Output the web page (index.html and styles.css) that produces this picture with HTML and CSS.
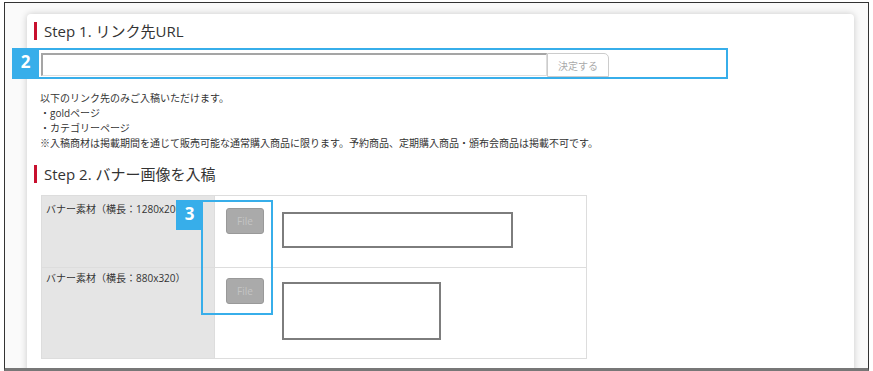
FILE: index.html
```html
<!DOCTYPE html>
<html>
<head>
  <meta charset="UTF-8">
  <title>バナー入稿</title>
  <link rel="stylesheet" href="styles.css">
</head>
<body>
  <div class="frame">
    <div class="card">
      <!-- Step 1 -->
      <h2 class="step-title">Step 1. リンク先URL</h2>
      <div class="url-row">
        <input type="text" class="url-input">
        <button class="btn-decide">決定する</button>
      </div>
      <div class="notes">
        <p>以下のリンク先のみご入稿いただけます。</p>
        <p>・goldページ</p>
        <p>・カテゴリーページ</p>
        <p>※入稿商材は掲載期間を通じて販売可能な通常購入商品に限ります。予約商品、定期購入商品・頒布会商品は掲載不可です。</p>
      </div>

      <!-- Step 2 -->
      <h2 class="step-title step-2">Step 2. バナー画像を入稿</h2>
      <table class="upload-table">
        <tr class="row-wide">
          <th>バナー素材（横長：1280x200）</th>
          <td>
            <div class="upload-cell">
              <button class="btn-file">File</button>
              <div class="preview preview-wide"></div>
            </div>
          </td>
        </tr>
        <tr class="row-small">
          <th>バナー素材（横長：880x320）</th>
          <td>
            <div class="upload-cell">
              <button class="btn-file">File</button>
              <div class="preview preview-small"></div>
            </div>
          </td>
        </tr>
      </table>
    </div>
  </div>

  <!-- Annotation markers -->
  <div class="marker marker-2">
    <span class="marker-num">2</span>
  </div>
  <div class="marker marker-3">
    <span class="marker-num">3</span>
  </div>
</body>
</html>
```

FILE: styles.css
```css
* {
  box-sizing: border-box;
}

body {
  margin: 0;
  font-family: "Open Sans", "Noto Sans CJK JP", sans-serif;
  color: #333;
  background: #fff;
}

/* Screenshot frame */
.frame {
  margin: 2px 0 0 4px;
  width: 865px;
  height: 369px;
  border: 1px solid #333;
  border-bottom: 3px solid #777;
  background: #fafafa;
  overflow: hidden;
}

.card {
  margin: 11px 14px 0 22px;
  height: 400px;
  background: #fff;
  border-radius: 4px 4px 0 0;
  box-shadow: 0 0 7px rgba(0, 0, 0, 0.2);
  padding: 8px 0 0 7px;
}

/* Step titles */
.step-title {
  margin: 0;
  height: 18px;
  line-height: 18px;
  font-size: 15px;
  font-weight: normal;
  border-left: 3px solid #c8102e;
  padding-left: 7px;
  color: #333;
}

.step-2 {
  margin-top: 14px;
}

/* URL row */
.url-row {
  display: flex;
  margin: 13px 0 0 7px;
}

.url-input {
  width: 506px;
  height: 23px;
  margin: 0;
  border-style: solid;
  border-width: 2px 1px 1px 2px;
  border-color: #a5a5a5 #ddd #ddd #a5a5a5;
  padding: 0 4px;
}

.btn-decide {
  width: 62px;
  height: 24px;
  margin: 0;
  padding: 0;
  background: #fff;
  border: 1px solid #ccc;
  border-radius: 0 5px 0 0;
  color: #aaa;
  font-family: "Noto Sans CJK JP", sans-serif;
  font-size: 10px;
}

/* Notes */
.notes {
  margin: 14px 0 0 6px;
  font-size: 10px;
  line-height: 15px;
  color: #333;
}

.notes p {
  margin: 0;
}

/* Upload table */
.upload-table {
  margin: 12px 0 0 7px;
  width: 546px;
  border-collapse: collapse;
  font-size: 10px;
}

.upload-table th,
.upload-table td {
  border: 1px solid #ddd;
  vertical-align: top;
  padding: 0;
}

.upload-table th {
  width: 173px;
  background: #e5e5e5;
  font-weight: normal;
  text-align: left;
  white-space: nowrap;
  overflow: hidden;
  padding: 6px 4px;
  line-height: 15px;
}

.row-wide {
  height: 72px;
}

.row-small {
  height: 91px;
}

.row-small th {
  padding-top: 3px;
}

.upload-cell {
  display: flex;
  align-items: flex-start;
  gap: 18px;
  padding: 12px 0 0 11px;
}

.row-small .upload-cell {
  padding-top: 10px;
}

.btn-file {
  width: 38px;
  height: 26px;
  margin: 0;
  padding: 0;
  background: #aaa;
  border: 1px solid #999;
  border-radius: 3px;
  color: #c4c4c4;
  font-family: "Open Sans", sans-serif;
  font-size: 10px;
}

.preview {
  margin-top: 4px;
  border: 2px solid #7d7d7d;
  background: #fff;
}

.preview-wide {
  width: 231px;
  height: 36px;
}

.preview-small {
  width: 159px;
  height: 58px;
}

/* Annotation markers */
.marker {
  position: absolute;
  border: 2px solid #37aeea;
}

.marker-num {
  position: absolute;
  top: -2px;
  background: #37aeea;
  color: #fff;
  font-family: "Open Sans", sans-serif;
  font-weight: bold;
  font-size: 17px;
  line-height: 28px;
  text-align: center;
}

.marker-2 {
  left: 37px;
  top: 48px;
  width: 691px;
  height: 31px;
}

.marker-2 .marker-num {
  left: -27px;
  width: 27px;
  height: 31px;
}

.marker-3 {
  left: 201px;
  top: 200px;
  width: 72px;
  height: 115px;
}

.marker-3 .marker-num {
  left: -27px;
  width: 27px;
  height: 30px;
}
```
